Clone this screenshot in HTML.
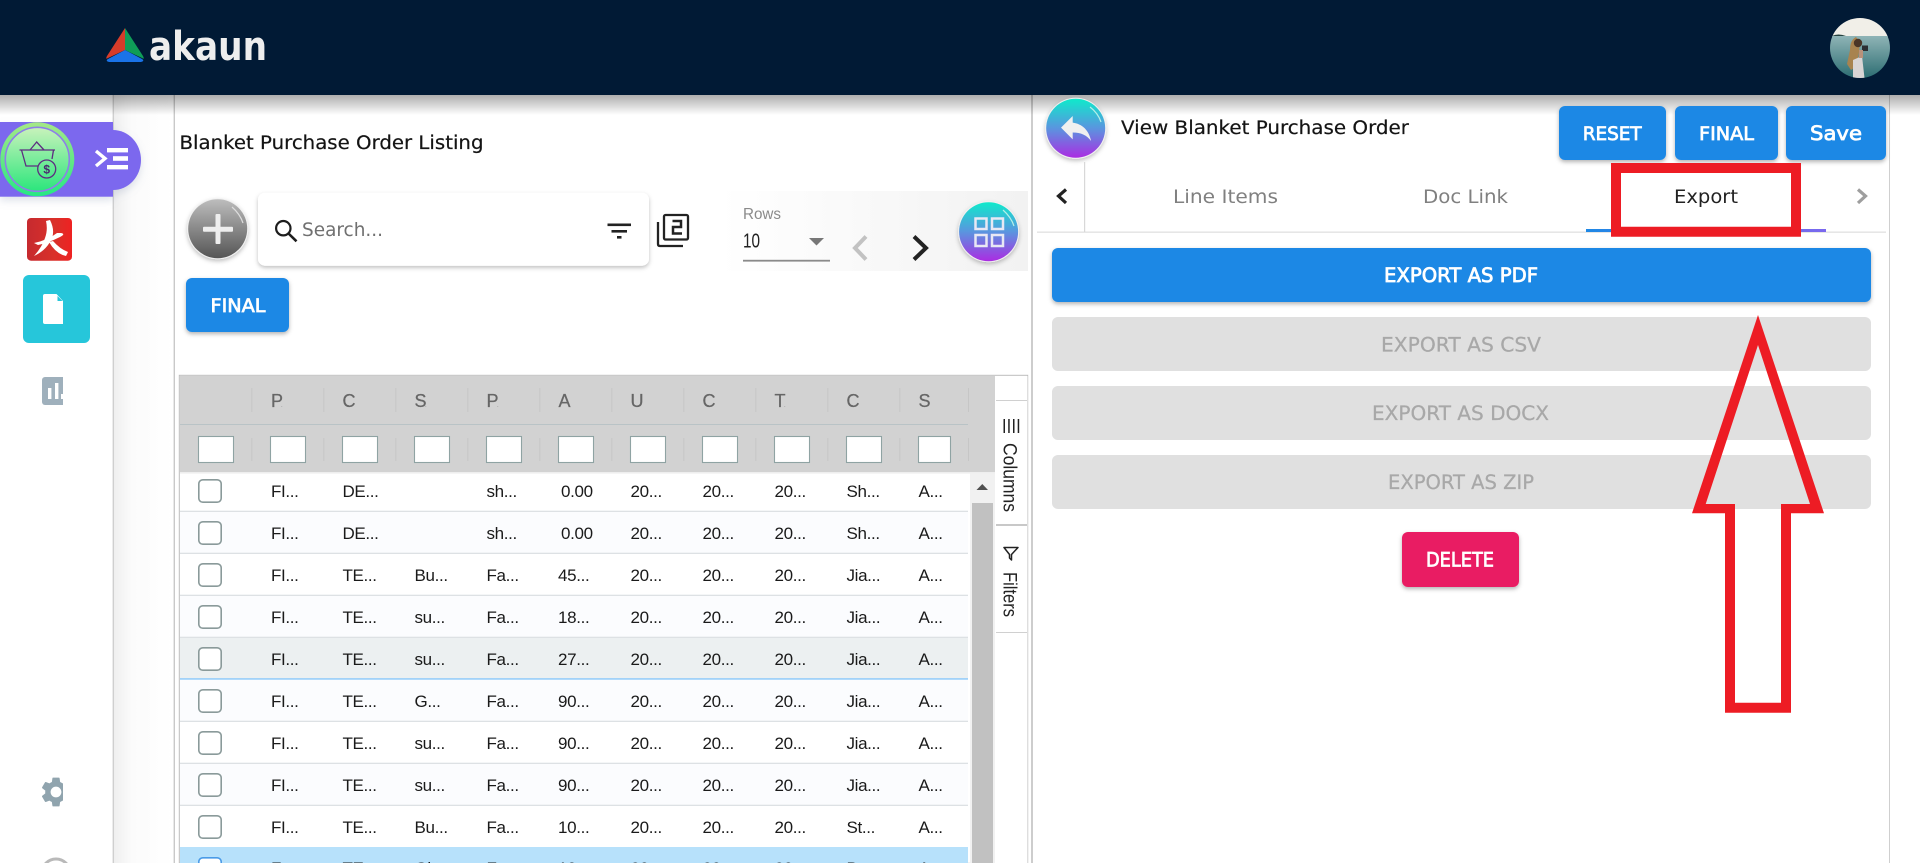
<!DOCTYPE html>
<html lang="en">
<head>
<meta charset="utf-8">
<title>Blanket Purchase Order Listing</title>
<style>
html,body{margin:0;padding:0;background:#fff;width:1920px;height:863px;overflow:hidden}
svg{display:block}
.d{font-family:"DejaVu Sans","Liberation Sans",sans-serif}
.l{font-family:"Liberation Sans",sans-serif}
.b{stroke:#fff;stroke-width:.75px}
.k{stroke:#141414;stroke-width:.2px}
</style>
</head>
<body>
<svg xmlns="http://www.w3.org/2000/svg" width="1920" height="863" viewBox="0 0 1920 863">
<defs>
<linearGradient id="gc" x1="0" y1="0" x2="0" y2="1"><stop offset="0" stop-color="#0feacb"/><stop offset=".5" stop-color="#5a95df"/><stop offset="1" stop-color="#ab2ce2"/></linearGradient>
<linearGradient id="gp" x1="0" y1="0" x2="0" y2="1"><stop offset="0" stop-color="#bdbdbd"/><stop offset="1" stop-color="#555"/></linearGradient>
<linearGradient id="gg1" x1="0" y1="0" x2="0" y2="1"><stop offset="0" stop-color="#a5e886"/><stop offset="1" stop-color="#26e884"/></linearGradient>
<linearGradient id="gg2" x1="0" y1="0" x2="0" y2="1"><stop offset="0" stop-color="#c9f2bb"/><stop offset="1" stop-color="#2be67c"/></linearGradient>
<linearGradient id="gh" x1="0" y1="0" x2="0" y2="1"><stop offset="0" stop-color="#000" stop-opacity=".32"/><stop offset="1" stop-color="#000" stop-opacity="0"/></linearGradient>
<linearGradient id="gb" x1="0" y1="0" x2="1" y2="0"><stop offset="0" stop-color="#efefef"/><stop offset=".3" stop-color="#fbfbfb"/><stop offset="1" stop-color="#fff"/></linearGradient>
<linearGradient id="gt" x1="0" y1="0" x2="1" y2="0"><stop offset="0" stop-color="#1e88e5"/><stop offset="1" stop-color="#7b68ee"/></linearGradient>
<linearGradient id="gr" x1="0" y1="0" x2="1" y2="0"><stop offset="0" stop-color="#fff"/><stop offset="1" stop-color="#f2f2f2"/></linearGradient>
<linearGradient id="glogo" x1="0" y1="0" x2="1" y2="0"><stop offset="0" stop-color="#c62a2f"/><stop offset=".6" stop-color="#d9302a"/><stop offset="1" stop-color="#ee2222"/></linearGradient>
<linearGradient id="gsea" x1="0" y1="0" x2="0" y2="1"><stop offset="0" stop-color="#8fb4b6"/><stop offset="1" stop-color="#2c6d72"/></linearGradient>
<filter id="s" x="-20%" y="-30%" width="140%" height="170%"><feDropShadow dx="0" dy="2" stdDeviation="2" flood-color="#000" flood-opacity=".3"/></filter>
<filter id="s2" x="-20%" y="-20%" width="140%" height="150%"><feDropShadow dx="0" dy="2" stdDeviation="2" flood-color="#000" flood-opacity=".25"/></filter>
<filter id="s3" x="-10%" y="-10%" width="120%" height="130%"><feDropShadow dx="0" dy="4" stdDeviation="4" flood-color="#8090b0" flood-opacity=".25"/></filter>
<clipPath id="c63"><rect x="0" y="350" width="63" height="513"/></clipPath>
<clipPath id="cav"><circle cx="1860" cy="48" r="30"/></clipPath>
</defs>

<!-- page structure lines -->
<rect x="114" y="95" width="60" height="768" fill="url(#gb)"/>
<rect x="112.6" y="95" width="1.4" height="768" fill="#cfcfcf"/>
<rect x="173.6" y="95" width="1.4" height="768" fill="#c9c9c9"/>
<rect x="1031" y="95" width="2" height="768" fill="#cdcdcd"/>
<rect x="1889" y="95" width="1" height="768" fill="#cfcfcf"/>

<!-- header -->
<rect x="0" y="95" width="1920" height="20" fill="url(#gh)"/>
<rect x="0" y="0" width="1920" height="95" fill="#011a35"/>
<path d="M125 28 L107 56 Q105 60 108 58 L125 50Z" fill="#d63c2a"/>
<path d="M125 28 L143 56 Q145 60 142 58 L125 50Z" fill="#0f9d58"/>
<path d="M125 50 L108 59 Q105 61 109 62 H141 Q145 61 142 59Z" fill="#1a73e8"/>
<text class="d" x="149" y="60" font-size="40" font-weight="700" fill="#eeeeee" textLength="118" lengthAdjust="spacingAndGlyphs">akaun</text>
<g clip-path="url(#cav)">
<rect x="1830" y="18" width="60" height="19" fill="#f1efe8"/>
<rect x="1830" y="36" width="60" height="42" fill="url(#gsea)"/>
<path d="M1832 36 Q1838 33 1846 36Z" fill="#25423f"/>
<path d="M1856 37 Q1850 40 1850 50 L1847 64 L1851 70 L1857 66 L1859 52 L1860 42 Z" fill="#a8834f"/>
<circle cx="1858" cy="43" r="4.2" fill="#4a3526"/>
<path d="M1853 60 L1862 56 L1864.5 78 H1853Z" fill="#d9d5d5"/>
<rect x="1862" y="45.5" width="6" height="5.5" fill="#2b2f33"/>
<rect x="1859" y="50" width="4" height="8" fill="#b9917a"/>
</g>

<!-- pill + sidebar -->
<g filter="url(#s3)">
<rect x="0" y="122" width="113" height="74.7" fill="#7b68ee"/>
<path d="M113 130 A28 30 0 0 1 113 190Z" fill="#7b68ee"/>
</g>
<circle cx="37.3" cy="159.3" r="37" fill="url(#gg1)"/>
<circle cx="37.3" cy="159.3" r="32" fill="url(#gg2)" stroke="#8d7fe8" stroke-width="1.6"/>
<g fill="none" stroke="#5d2d80" stroke-width="1.3">
<path d="M19.5 150 H55"/>
<path d="M21.5 150 L26 166 H38"/>
<path d="M53.5 150 L52 159"/>
<path d="M30 150 L36.7 142 L44 150"/>
<circle cx="46.7" cy="169" r="9"/>
</g>
<text class="l" x="46.7" y="173.5" font-size="12" font-weight="700" fill="#4a2a70" text-anchor="middle">$</text>
<path d="M96 151 L105 158.5 L96 166" fill="none" stroke="#fff" stroke-width="3.4"/>
<rect x="107" y="148" width="21" height="4.4" fill="#fff"/>
<rect x="113" y="156.2" width="15" height="4.6" fill="#fff"/>
<rect x="107" y="165" width="21" height="4.4" fill="#fff"/>

<rect x="27" y="218" width="45" height="42.7" rx="4" fill="url(#glogo)"/>
<g fill="#fff">
<path d="M46 221 L50 220 Q55 230 52 238 Q47 250 34 256 Q42 247 45 238 Q48 230 46 221Z"/>
<path d="M34 243 Q48 240 57 233 L61 233 Q66 234 60 237 Q48 243 38 245Z"/>
<path d="M49 242 L53 241 Q60 249 68 252 L66 256 Q56 254 49 242Z"/>
</g>

<rect x="23" y="275" width="67" height="68" rx="6" fill="#26c6da"/>
<path d="M45 294 H56.5 L63 301 V324 H45 Q43 324 43 322 V296 Q43 294 45 294Z" fill="#fff"/>
<path d="M57.5 296 L62.5 301 H57.5Z" fill="#26c6da"/>

<g clip-path="url(#c63)">
<rect x="42" y="377" width="30" height="28" rx="3" fill="#9fb0bc"/>
<rect x="48" y="388" width="3.4" height="11" fill="#fff"/>
<rect x="55" y="383" width="3.4" height="16" fill="#fff"/>
<rect x="61" y="394" width="3.4" height="5" fill="#fff"/>
<path transform="translate(38 774) scale(1.5)" fill="#90a4ae" d="M19.14 12.94c.04-.3.06-.61.06-.94 0-.32-.02-.64-.07-.94l2.03-1.58a.49.49 0 0 0 .12-.61l-1.92-3.32a.488.488 0 0 0-.59-.22l-2.39.96c-.5-.38-1.03-.7-1.62-.94l-.36-2.54a.484.484 0 0 0-.48-.41h-3.84c-.24 0-.43.17-.47.41l-.36 2.54c-.59.24-1.13.57-1.62.94l-2.39-.96c-.22-.08-.47 0-.59.22L2.74 8.87c-.12.21-.08.47.12.61l2.03 1.58c-.05.3-.09.63-.09.94s.02.64.07.94l-2.03 1.58a.49.49 0 0 0-.12.61l1.92 3.32c.12.22.37.29.59.22l2.39-.96c.5.38 1.03.7 1.62.94l.36 2.54c.05.24.24.41.48.41h3.84c.24 0 .44-.17.47-.41l.36-2.54c.59-.24 1.13-.56 1.62-.94l2.39.96c.22.08.47 0 .59-.22l1.92-3.32c.12-.22.07-.47-.12-.61l-2.01-1.58zM12 15.6c-1.98 0-3.6-1.62-3.6-3.6s1.62-3.6 3.6-3.6 3.6 1.62 3.6 3.6-1.62 3.6-3.6 3.6z"/>
</g>
<circle cx="56" cy="873" r="14" fill="none" stroke="#b9b9b9" stroke-width="3"/>

<!-- listing header -->
<text class="d k" x="179.5" y="149" font-size="18.5" fill="#141414" textLength="304" lengthAdjust="spacingAndGlyphs">Blanket Purchase Order Listing</text>

<circle cx="217.7" cy="228.7" r="30.5" fill="#f0f0f0" filter="url(#s2)"/>
<circle cx="217.7" cy="228.7" r="29.5" fill="url(#gp)"/>
<path d="M232 207 Q240 214 243 223" fill="none" stroke="#ddd" stroke-width="1.2"/>
<rect x="203" y="226.7" width="30" height="5" rx="1" fill="#eeeeee"/>
<rect x="215.5" y="214" width="5" height="30" rx="1" fill="#eeeeee"/>

<rect x="258" y="192.7" width="391" height="73" rx="7" fill="#fff" filter="url(#s2)"/>
<circle cx="283.3" cy="228.2" r="7.2" fill="none" stroke="#1d1d1d" stroke-width="2.2"/>
<path d="M288.5 233.5 L296.5 241.3" stroke="#1d1d1d" stroke-width="2.6"/>
<text class="d" x="302" y="236" font-size="19" fill="#707070" textLength="81" lengthAdjust="spacingAndGlyphs">Search...</text>
<rect x="607.5" y="223.5" width="23.5" height="2.6" fill="#222"/>
<rect x="611.5" y="230" width="15.5" height="2.6" fill="#222"/>
<rect x="617" y="236" width="4.5" height="2.6" fill="#222"/>
<g fill="none" stroke="#222" stroke-width="2.3">
<rect x="664" y="215" width="24" height="24.5" rx="1.5"/>
<path d="M658 222 V244 Q658 246 660 246 H683"/>
<path d="M672.5 221 H681 V227 H673 V233.5 H682" stroke-width="2.5"/>
</g>

<rect x="720" y="191" width="308" height="80" fill="url(#gr)"/>
<text class="l" x="743" y="219" font-size="15.5" fill="#8a8a8a" textLength="38" lengthAdjust="spacingAndGlyphs">Rows</text>
<text class="l" x="743" y="247.5" font-size="20" fill="#222" textLength="17" lengthAdjust="spacingAndGlyphs">10</text>
<path d="M809 238 H824 L816.5 245.5Z" fill="#777"/>
<rect x="743" y="259.8" width="87" height="1.8" fill="#8a8a8a"/>
<path d="M866 236.5 L855 248 L866 259.5" fill="none" stroke="#c2c2c2" stroke-width="4"/>
<path d="M914 236.5 L926 248 L914 259.5" fill="none" stroke="#222" stroke-width="4"/>
<circle cx="988.6" cy="231.7" r="30.5" fill="#f0f0f0" filter="url(#s2)"/>
<circle cx="988.6" cy="231.7" r="29.5" fill="url(#gc)"/>
<path d="M1003 210 Q1011 217 1014 226" fill="none" stroke="#b5efe8" stroke-width="1.2"/>
<g fill="none" stroke="#e8e8f4" stroke-width="2.5">
<rect x="975.5" y="218.5" width="11" height="10.5"/>
<rect x="992" y="218.5" width="11" height="10.5"/>
<rect x="975.5" y="235" width="11" height="11"/>
<rect x="992" y="235" width="11" height="11"/>
</g>

<rect x="186" y="278" width="103" height="54" rx="6" fill="#1e88e5" filter="url(#s)"/>
<text class="d b" x="210.5" y="312" font-size="19" fill="#fff" textLength="55" lengthAdjust="spacingAndGlyphs">FINAL</text>

<!-- grid -->
<rect x="179" y="375" width="849" height="488" fill="#fff"/>
<rect x="179.3" y="375.3" width="848.4" height="488" fill="none" stroke="#bdbdbd" stroke-width="1"/>
<rect x="180" y="376" width="815" height="97" fill="#d2d2d2"/>
<rect x="180" y="424" width="788" height="1" fill="#b9c3c6"/>
<rect x="180" y="472" width="815" height="1.6" fill="#eeeeee"/>

<g fill="#c3c3c3">
<rect x="251.5" y="388" width=".8" height="24"/><rect x="323.5" y="388" width=".8" height="24"/><rect x="395.5" y="388" width=".8" height="24"/><rect x="467.5" y="388" width=".8" height="24"/><rect x="539.5" y="388" width=".8" height="24"/><rect x="611.5" y="388" width=".8" height="24"/><rect x="683.5" y="388" width=".8" height="24"/><rect x="755.5" y="388" width=".8" height="24"/><rect x="827.5" y="388" width=".8" height="24"/><rect x="899.5" y="388" width=".8" height="24"/><rect x="968" y="388" width=".8" height="24"/>
<rect x="251.5" y="438" width=".8" height="23"/><rect x="323.5" y="438" width=".8" height="23"/><rect x="395.5" y="438" width=".8" height="23"/><rect x="467.5" y="438" width=".8" height="23"/><rect x="539.5" y="438" width=".8" height="23"/><rect x="611.5" y="438" width=".8" height="23"/><rect x="683.5" y="438" width=".8" height="23"/><rect x="755.5" y="438" width=".8" height="23"/><rect x="827.5" y="438" width=".8" height="23"/><rect x="899.5" y="438" width=".8" height="23"/><rect x="968" y="438" width=".8" height="23"/>
</g>

<g class="l" font-size="18" fill="#666" stroke="#666" stroke-width=".25">
<text x="271" y="407">P</text><text x="342.5" y="407">C</text><text x="414.5" y="407">S</text><text x="486.5" y="407">P</text><text x="558.5" y="407">A</text><text x="630.5" y="407">U</text><text x="702.5" y="407">C</text><text x="774.5" y="407">T</text><text x="846.5" y="407">C</text><text x="918.5" y="407">S</text>
</g>
<g class="l" font-size="6" fill="#8a8a8a">
<text x="281" y="407">.</text><text x="425" y="407">.</text><text x="497" y="407">.</text><text x="784" y="407">.</text>
</g>

<g fill="#fff" stroke="#8fa3a3" stroke-width="1.1">
<rect x="198.5" y="436.5" width="35" height="26"/><rect x="270.5" y="436.5" width="35" height="26"/><rect x="342.5" y="436.5" width="35" height="26"/><rect x="414.5" y="436.5" width="35" height="26"/><rect x="486.5" y="436.5" width="35" height="26"/><rect x="558.5" y="436.5" width="35" height="26"/><rect x="630.5" y="436.5" width="35" height="26"/><rect x="702.5" y="436.5" width="35" height="26"/><rect x="774.5" y="436.5" width="35" height="26"/><rect x="846.5" y="436.5" width="35" height="26"/><rect x="918.5" y="436.5" width="32" height="26"/>
</g>

<!-- row backgrounds -->
<rect x="180" y="512" width="788" height="41" fill="#fbfcfe"/>
<rect x="180" y="596" width="788" height="41" fill="#fbfcfe"/>
<rect x="180" y="638" width="788" height="41" fill="#ecf0f1"/>
<rect x="180" y="680" width="788" height="41" fill="#fbfcfe"/>
<rect x="180" y="764" width="788" height="41" fill="#fbfcfe"/>
<rect x="180" y="847" width="788" height="16" fill="#b7e1fb"/>
<g fill="#dde1e4">
<rect x="180" y="510.7" width="788" height="1.3"/><rect x="180" y="552.7" width="788" height="1.3"/><rect x="180" y="594.7" width="788" height="1.3"/><rect x="180" y="636.7" width="788" height="1.3"/><rect x="180" y="720.7" width="788" height="1.3"/><rect x="180" y="762.7" width="788" height="1.3"/><rect x="180" y="804.7" width="788" height="1.3"/>
</g>
<rect x="180" y="678.2" width="788" height="1.5" fill="#90caf9"/>

<g fill="#fff" stroke="#8a9a9a" stroke-width="1.6">
<rect x="198.8" y="479.8" width="22.4" height="22.4" rx="4"/><rect x="198.8" y="521.8" width="22.4" height="22.4" rx="4"/><rect x="198.8" y="563.8" width="22.4" height="22.4" rx="4"/><rect x="198.8" y="605.8" width="22.4" height="22.4" rx="4"/><rect x="198.8" y="647.8" width="22.4" height="22.4" rx="4"/><rect x="198.8" y="689.8" width="22.4" height="22.4" rx="4"/><rect x="198.8" y="731.8" width="22.4" height="22.4" rx="4"/><rect x="198.8" y="773.8" width="22.4" height="22.4" rx="4"/><rect x="198.8" y="815.8" width="22.4" height="22.4" rx="4"/>
<rect x="198.8" y="857.8" width="22.4" height="22.4" rx="4" stroke="#4a9be8"/>
</g>

<g class="l" font-size="17" letter-spacing="-.35" fill="#1a1a1a">
<text x="271" y="497">FI...</text><text x="342.5" y="497">DE...</text><text x="486.5" y="497">sh...</text><text x="561" y="497">0.00</text><text x="630.5" y="497">20...</text><text x="702.5" y="497">20...</text><text x="774.5" y="497">20...</text><text x="846.5" y="497">Sh...</text><text x="918.5" y="497">A...</text>
<text x="271" y="539">FI...</text><text x="342.5" y="539">DE...</text><text x="486.5" y="539">sh...</text><text x="561" y="539">0.00</text><text x="630.5" y="539">20...</text><text x="702.5" y="539">20...</text><text x="774.5" y="539">20...</text><text x="846.5" y="539">Sh...</text><text x="918.5" y="539">A...</text>
<text x="271" y="581">FI...</text><text x="342.5" y="581">TE...</text><text x="414.5" y="581">Bu...</text><text x="486.5" y="581">Fa...</text><text x="558" y="581">45...</text><text x="630.5" y="581">20...</text><text x="702.5" y="581">20...</text><text x="774.5" y="581">20...</text><text x="846.5" y="581">Jia...</text><text x="918.5" y="581">A...</text>
<text x="271" y="623">FI...</text><text x="342.5" y="623">TE...</text><text x="414.5" y="623">su...</text><text x="486.5" y="623">Fa...</text><text x="558" y="623">18...</text><text x="630.5" y="623">20...</text><text x="702.5" y="623">20...</text><text x="774.5" y="623">20...</text><text x="846.5" y="623">Jia...</text><text x="918.5" y="623">A...</text>
<text x="271" y="665">FI...</text><text x="342.5" y="665">TE...</text><text x="414.5" y="665">su...</text><text x="486.5" y="665">Fa...</text><text x="558" y="665">27...</text><text x="630.5" y="665">20...</text><text x="702.5" y="665">20...</text><text x="774.5" y="665">20...</text><text x="846.5" y="665">Jia...</text><text x="918.5" y="665">A...</text>
<text x="271" y="707">FI...</text><text x="342.5" y="707">TE...</text><text x="414.5" y="707">G...</text><text x="486.5" y="707">Fa...</text><text x="558" y="707">90...</text><text x="630.5" y="707">20...</text><text x="702.5" y="707">20...</text><text x="774.5" y="707">20...</text><text x="846.5" y="707">Jia...</text><text x="918.5" y="707">A...</text>
<text x="271" y="749">FI...</text><text x="342.5" y="749">TE...</text><text x="414.5" y="749">su...</text><text x="486.5" y="749">Fa...</text><text x="558" y="749">90...</text><text x="630.5" y="749">20...</text><text x="702.5" y="749">20...</text><text x="774.5" y="749">20...</text><text x="846.5" y="749">Jia...</text><text x="918.5" y="749">A...</text>
<text x="271" y="791">FI...</text><text x="342.5" y="791">TE...</text><text x="414.5" y="791">su...</text><text x="486.5" y="791">Fa...</text><text x="558" y="791">90...</text><text x="630.5" y="791">20...</text><text x="702.5" y="791">20...</text><text x="774.5" y="791">20...</text><text x="846.5" y="791">Jia...</text><text x="918.5" y="791">A...</text>
<text x="271" y="833">FI...</text><text x="342.5" y="833">TE...</text><text x="414.5" y="833">Bu...</text><text x="486.5" y="833">Fa...</text><text x="558" y="833">10...</text><text x="630.5" y="833">20...</text><text x="702.5" y="833">20...</text><text x="774.5" y="833">20...</text><text x="846.5" y="833">St...</text><text x="918.5" y="833">A...</text>
<text x="271" y="874">F...</text><text x="342.5" y="874">TE...</text><text x="414.5" y="874">Gi...</text><text x="486.5" y="874">Fa...</text><text x="558" y="874">10...</text><text x="630.5" y="874">20...</text><text x="702.5" y="874">20...</text><text x="774.5" y="874">20...</text><text x="846.5" y="874">Ba...</text><text x="918.5" y="874">A...</text>
</g>

<!-- scrollbar -->
<rect x="970" y="473.6" width="25" height="390" fill="#f1f1f1"/>
<rect x="972" y="503" width="21" height="360" fill="#c1c1c1"/>
<path d="M976.5 490 L982.3 484 L988 490Z" fill="#505050"/>

<!-- side tabs -->
<rect x="995" y="376" width="32.5" height="487" fill="#fff"/>
<rect x="996" y="400" width="31" height="1" fill="#d0d0d0"/>
<rect x="996" y="524" width="31" height="2" fill="#c8c8c8"/>
<rect x="996" y="632" width="31" height="1" fill="#d0d0d0"/>
<g fill="#222">
<rect x="1003.5" y="419" width="1.5" height="14"/><rect x="1008.2" y="419" width="1.5" height="14"/><rect x="1013" y="419" width="1.5" height="14"/><rect x="1017.7" y="419" width="1.5" height="14"/>
</g>
<text class="l" transform="translate(1003.5 443) rotate(90)" font-size="19" fill="#222" textLength="69" lengthAdjust="spacingAndGlyphs">Columns</text>
<path d="M1004 547.5 H1018 L1011.5 554.5 V560 L1009.5 558 V554.5Z" fill="none" stroke="#222" stroke-width="1.5" stroke-linejoin="round"/>
<text class="l" transform="translate(1003.5 572) rotate(90)" font-size="19" fill="#222" textLength="45" lengthAdjust="spacingAndGlyphs">Filters</text>

<!-- right panel -->
<circle cx="1075.7" cy="128.3" r="30.5" fill="#f0f0f0" filter="url(#s2)"/>
<circle cx="1075.7" cy="128.3" r="29.5" fill="url(#gc)"/>
<path d="M1090 107 Q1098 113 1101 122" fill="none" stroke="#b5efe8" stroke-width="1.2"/>
<path transform="translate(1056 107.6) scale(1.67)" fill="#f0f0f0" d="M10 9V5l-7 7 7 7v-4.1c5 0 8.5 1.6 11 5.1-1-5-4-10-11-11z"/>
<text class="d k" x="1121" y="134" font-size="18.5" fill="#141414" textLength="288" lengthAdjust="spacingAndGlyphs">View Blanket Purchase Order</text>

<rect x="1559" y="106" width="107" height="54" rx="6" fill="#1e88e5" filter="url(#s)"/>
<rect x="1675" y="106" width="103" height="54" rx="6" fill="#1e88e5" filter="url(#s)"/>
<rect x="1786" y="106" width="100" height="54" rx="6" fill="#1e88e5" filter="url(#s)"/>
<text class="d b" x="1582.7" y="140" font-size="19" fill="#fff" textLength="59" lengthAdjust="spacingAndGlyphs">RESET</text>
<text class="d b" x="1699" y="140" font-size="19" fill="#fff" textLength="55" lengthAdjust="spacingAndGlyphs">FINAL</text>
<text class="d b" x="1810" y="140" font-size="19.5" fill="#fff" textLength="52" lengthAdjust="spacingAndGlyphs">Save</text>

<rect x="1037" y="231.5" width="849" height="1.3" fill="#e0e0e0"/>
<rect x="1084" y="162" width="1.2" height="70" fill="#d8d8d8"/>
<path d="M1066 189.5 L1058.5 196 L1066 203" fill="none" stroke="#222" stroke-width="3.2"/>
<text class="d" x="1173" y="203" font-size="19" fill="#808080" textLength="105" lengthAdjust="spacingAndGlyphs">Line Items</text>
<text class="d" x="1423" y="203" font-size="19" fill="#808080" textLength="85" lengthAdjust="spacingAndGlyphs">Doc Link</text>
<text class="d" x="1674" y="203" font-size="19" fill="#222" textLength="64" lengthAdjust="spacingAndGlyphs">Export</text>
<rect x="1586" y="229" width="240" height="3" fill="url(#gt)"/>
<path d="M1858 189.5 L1865.5 196 L1858 203" fill="none" stroke="#9e9e9e" stroke-width="3.2"/>

<rect x="1052" y="248" width="819" height="54" rx="6" fill="#1e88e5" filter="url(#s)"/>
<rect x="1052" y="317" width="819" height="54" rx="6" fill="#e0e0e0"/>
<rect x="1052" y="386" width="819" height="54" rx="6" fill="#e0e0e0"/>
<rect x="1052" y="455" width="819" height="54" rx="6" fill="#e0e0e0"/>
<text class="d b" x="1384" y="282" font-size="19.5" fill="#fff" textLength="154" lengthAdjust="spacingAndGlyphs">EXPORT AS PDF</text>
<text class="d" x="1381" y="351.5" font-size="19.5" fill="#a8a8a8" stroke="#a8a8a8" stroke-width=".25" textLength="160" lengthAdjust="spacingAndGlyphs">EXPORT AS CSV</text>
<text class="d" x="1372" y="420" font-size="19.5" fill="#a8a8a8" stroke="#a8a8a8" stroke-width=".25" textLength="177" lengthAdjust="spacingAndGlyphs">EXPORT AS DOCX</text>
<text class="d" x="1388" y="489" font-size="19.5" fill="#a8a8a8" stroke="#a8a8a8" stroke-width=".25" textLength="146" lengthAdjust="spacingAndGlyphs">EXPORT AS ZIP</text>
<rect x="1402" y="532" width="117" height="55" rx="6" fill="#e91e63" filter="url(#s)"/>
<text class="d b" x="1426" y="566.7" font-size="19.5" fill="#fff" textLength="68" lengthAdjust="spacingAndGlyphs">DELETE</text>

<!-- annotations -->
<path fill="#ed1c24" fill-rule="evenodd" d="M1611 163 H1801 V236.7 H1611Z M1621 173 V226.7 H1791 V173Z"/>
<path fill="#ed1c24" fill-rule="evenodd" d="M1758 315 L1824 513.3 H1791 V712.7 H1725 V513.3 H1692Z M1758 345 L1705.7 504 H1735 V702.7 H1781 V504 H1810Z"/>
</svg>
</body>
</html>
